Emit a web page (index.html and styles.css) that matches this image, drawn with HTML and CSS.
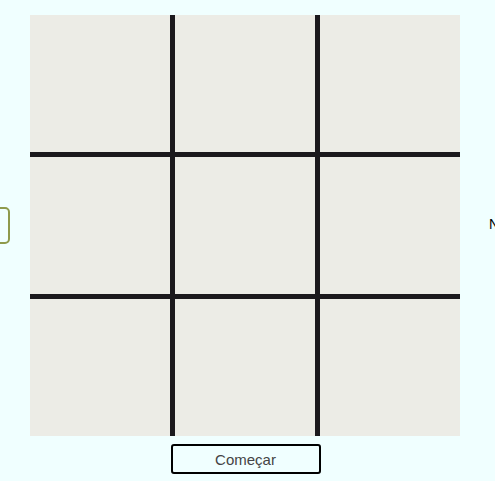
FILE: index.html
```html
<!DOCTYPE html>
<html>
<head>
<meta charset="utf-8">
<link rel="stylesheet" href="styles.css">
</head>
<body>
<div class="page">
  <div class="row">
    <div class="side-box"></div>
    <div class="board">
      <div class="cell"></div><div class="cell"></div><div class="cell"></div>
      <div class="cell"></div><div class="cell"></div><div class="cell"></div>
      <div class="cell"></div><div class="cell"></div><div class="cell"></div>
    </div>
    <div class="side-text">Nome</div>
  </div>
  <div class="actions">
    <button class="start">Começar</button>
  </div>
</div>
</body>
</html>
```
FILE: styles.css
```css
html, body {
  margin: 0;
  padding: 0;
  background: #f0ffff;
  overflow: hidden;
  font-family: "Liberation Sans", Arial, sans-serif;
}
.page {
  width: 495px;
  height: 481px;
  padding-top: 15px;
  box-sizing: border-box;
}
.row {
  display: flex;
  align-items: center;
  white-space: nowrap;
}
.side-box {
  flex: none;
  width: 40px;
  height: 37px;
  box-sizing: border-box;
  margin-left: -30px;
  margin-right: 20px;
  border: 2px solid #8e9a4c;
  border-radius: 5px;
  background: #f0ffff;
}
.board {
  flex: none;
  width: 430px;
  height: 421px;
  display: grid;
  grid-template-columns: 140px 140px 140px;
  grid-template-rows: 137px 137px 137px;
  gap: 5px;
  background: #1b191d;
}
.cell {
  background: #ecece6;
}
.side-text {
  flex: none;
  margin-left: 29px;
  margin-top: -3px;
  font-size: 14px;
  color: #000;
}
.actions {
  width: 495px;
  display: flex;
  justify-content: center;
  padding-top: 8px;
  padding-left: 1px;
  box-sizing: border-box;
}
.start {
  width: 150px;
  height: 30px;
  margin-right: 5px;
  border: 2px solid #000;
  border-radius: 3px;
  background: #f0ffff;
  color: #444;
  font-family: "Liberation Sans", Arial, sans-serif;
  font-size: 15px;
  padding: 0;
}
```
